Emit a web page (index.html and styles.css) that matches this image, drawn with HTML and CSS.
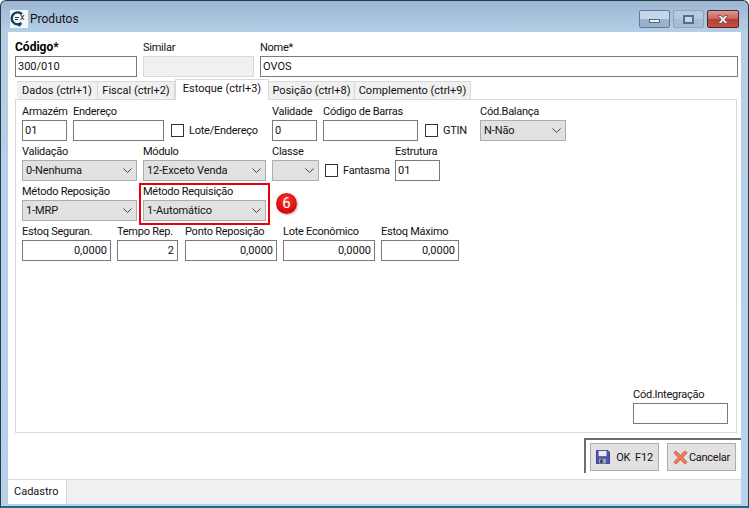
FILE: index.html
```html
<!DOCTYPE html>
<html lang="pt-BR">
<head>
    <meta charset="UTF-8">
    <title>Produtos</title>
    <link rel="stylesheet" href="styles.css">
</head>
<body>
    <div class="window">
        <div class="titlebar">
            <svg class="app-icon" width="18" height="18" viewBox="0 0 18 18">
                <rect width="18" height="18" fill="#f4f7fa"/>
                <path d="M12 4.200A6 6 0 1 0 11.500 13" fill="none" stroke="#123f5c" stroke-width="2.400"/>
                <path d="M5 7.500h4M5 9.500h3" stroke="#123f5c" stroke-width="1.200"/>
                <path d="M6.500 13.500l3 3.500 2-3z" fill="#123f5c"/>
                <text x="10" y="10" class="app-icon-text">x</text>
            </svg>
            <span class="title">Produtos</span>
            <div class="caption-buttons">
                <div class="cap-btn cap-min"><span class="cap-min-glyph"></span></div>
                <div class="cap-btn cap-max"><span class="cap-max-glyph"></span></div>
                <div class="cap-btn cap-close">
                    <svg width="16" height="11" viewBox="0 0 16 11">
                        <path d="M3 1.500h3l2 2.200 2-2.200h3L9.800 5.500 13 9.500h-3L8 7.300 6 9.500H3l3.200-4z" fill="#f2f2f2" stroke="#5a3a3a" stroke-width=".7"/>
                    </svg>
                </div>
            </div>
        </div>

        <div class="client">
            <div class="row top-row">
                <div class="field w122">
                    <label class="bold">Código*</label>
                    <input class="text-input" type="text" value="300/010">
                </div>
                <div class="field w111">
                    <label>Similar</label>
                    <input class="text-input disabled" type="text" disabled>
                </div>
                <div class="field grow">
                    <label>Nome*</label>
                    <input class="text-input" type="text" value="OVOS">
                </div>
            </div>

            <div class="tabs">
                <div class="tab w81">Dados (ctrl+1)</div>
                <div class="tab w77">Fiscal (ctrl+2)</div>
                <div class="tab active w94">Estoque (ctrl+3)</div>
                <div class="tab w86">Posição (ctrl+8)</div>
                <div class="tab w116">Complemento (ctrl+9)</div>
            </div>

            <div class="panel">
                <div class="row">
                    <div class="field w45">
                        <label>Armazém</label>
                        <input class="text-input" type="text" value="01">
                    </div>
                    <div class="field w91">
                        <label>Endereço</label>
                        <input class="text-input" type="text">
                    </div>
                    <div class="check w95 ml1"><span class="box"></span>Lote/Endereço</div>
                    <div class="field w45">
                        <label>Validade</label>
                        <input class="text-input" type="text" value="0">
                    </div>
                    <div class="field w95">
                        <label>Código de Barras</label>
                        <input class="text-input" type="text">
                    </div>
                    <div class="check w49 ml1"><span class="box"></span>GTIN</div>
                    <div class="field w86">
                        <label>Cód.Balança</label>
                        <div class="select">N-Não<svg class="chevron" width="9" height="5" viewBox="0 0 11 6"><path d="M.5.5l5 5 5-5" fill="none" stroke="#444" stroke-width="1.200"/></svg></div>
                    </div>
                </div>

                <div class="row">
                    <div class="field w115">
                        <label>Validação</label>
                        <div class="select">0-Nenhuma<svg class="chevron" width="9" height="5" viewBox="0 0 11 6"><path d="M.5.5l5 5 5-5" fill="none" stroke="#444" stroke-width="1.200"/></svg></div>
                    </div>
                    <div class="field w123">
                        <label>Módulo</label>
                        <div class="select">12-Exceto Venda<svg class="chevron" width="9" height="5" viewBox="0 0 11 6"><path d="M.5.5l5 5 5-5" fill="none" stroke="#444" stroke-width="1.200"/></svg></div>
                    </div>
                    <div class="field w47">
                        <label>Classe</label>
                        <div class="select"><svg class="chevron" width="9" height="5" viewBox="0 0 11 6"><path d="M.5.5l5 5 5-5" fill="none" stroke="#444" stroke-width="1.200"/></svg></div>
                    </div>
                    <div class="check w64"><span class="box"></span>Fantasma</div>
                    <div class="field w45">
                        <label>Estrutura</label>
                        <input class="text-input" type="text" value="01">
                    </div>
                </div>

                <div class="row">
                    <div class="field w115">
                        <label>Método Reposição</label>
                        <div class="select">1-MRP<svg class="chevron" width="9" height="5" viewBox="0 0 11 6"><path d="M.5.5l5 5 5-5" fill="none" stroke="#444" stroke-width="1.200"/></svg></div>
                    </div>
                    <div class="field w123">
                        <label>Método Requisição</label>
                        <div class="select">1-Automático<svg class="chevron" width="9" height="5" viewBox="0 0 11 6"><path d="M.5.5l5 5 5-5" fill="none" stroke="#444" stroke-width="1.200"/></svg></div>
                    </div>
                </div>

                <div class="row">
                    <div class="field w89">
                        <label>Estoq Seguran.</label>
                        <input class="text-input num" type="text" value="0,0000">
                    </div>
                    <div class="field w61">
                        <label>Tempo Rep.</label>
                        <input class="text-input num" type="text" value="2">
                    </div>
                    <div class="field w92 ml1">
                        <label>Ponto Reposição</label>
                        <input class="text-input num" type="text" value="0,0000">
                    </div>
                    <div class="field w92">
                        <label>Lote Econômico</label>
                        <input class="text-input num" type="text" value="0,0000">
                    </div>
                    <div class="field w78">
                        <label>Estoq Máximo</label>
                        <input class="text-input num" type="text" value="0,0000">
                    </div>
                </div>

                <div class="field w95 integration">
                    <label>Cód.Integração</label>
                    <input class="text-input" type="text">
                </div>

                <!-- marcacao do tutorial -->
                <div class="highlight"></div>
                <div class="badge">6</div>
            </div>

            <div class="footer">
                <div class="button-group">
                    <div class="btn">
                        <svg width="14" height="14" viewBox="0 0 16 16">
                            <path d="M.5.5h13l2 2v13H.5z" fill="#4a55ad" stroke="#2c3480"/>
                            <rect x="3" y="1" width="9" height="6" fill="#e8ecf5"/>
                            <rect x="3.500" y="10" width="8" height="5.500" fill="#9aa0ad"/>
                            <rect x="5" y="11" width="2.500" height="4" fill="#33363f"/>
                        </svg>
                        <span class="btn-ok-text">OK&nbsp; F12</span>
                    </div>
                    <div class="btn">
                        <svg width="15" height="15" viewBox="0 0 16 16">
                            <path d="M1 3l2-2 5 4.500 5-4.500 2 2-4.500 5 4.500 5-2 2-5-4.500-5 4.500-2-2 4.500-5z" fill="#f47a5a" stroke="#d0583c" stroke-width=".9"/>
                        </svg>
                        <span>Cancelar</span>
                    </div>
                </div>
            </div>

            <div class="statusbar">
                <div class="status-tab">Cadastro</div>
            </div>
        </div>
    </div>
</body>
</html>
```
FILE: styles.css
```css
* {
    box-sizing: border-box;
}

body {
    margin: 0;
    width: 749px;
    height: 508px;
    overflow: hidden;
    font-family: Roboto, 'Liberation Sans', sans-serif;
    font-size: 11px;
    color: #111;
    background: #fff;
}

.window {
    height: 508px;
    display: flex;
    flex-direction: column;
    padding: 0 7px 6px;
    border: 1px solid #2a3b47;
    border-bottom: 2px solid #1d6f80;
    border-radius: 6px 6px 0 0;
    background: linear-gradient(#9cb7d3 0, #b6cfe7 32px, #b9d2ec 100%);
}

/* barra de titulo */
.titlebar {
    height: 31px;
    flex: none;
    padding-top: 5px;
    display: flex;
    align-items: center;
}

.app-icon {
    margin: 0 2px 0 2px;
}

.app-icon-text {
    font-size: 9px;
    fill: #222;
}

.title {
    font-size: 12px;
    color: #111;
}

.caption-buttons {
    margin-left: auto;
    margin-right: 2px;
    display: flex;
    gap: 3px;
}

.cap-btn {
    height: 18px;
    border: 1px solid #5f7a96;
    border-radius: 2px;
    display: flex;
    align-items: center;
    justify-content: center;
}

.cap-min {
    width: 31px;
    background: linear-gradient(#c4d6e9 50%, #98b3cf 50%);
}

.cap-min-glyph {
    width: 11px;
    height: 4px;
    margin-top: 4px;
    background: #eef2f6;
    border: 1px solid #56657a;
}

.cap-max {
    width: 31px;
    border-color: #8aa5c0;
    background: linear-gradient(#b4cadf 50%, #a4bdd8 50%);
}

.cap-max-glyph {
    width: 11px;
    height: 9px;
    border: 2px solid #5a6c82;
    background: #c5d5e5;
}

.cap-close {
    width: 32px;
    border-color: #5a2030;
    background: linear-gradient(#dc9a90 0, #c9615a 50%, #b33e30 50%, #c8503f 100%);
}

/* area do formulario */
.client {
    flex: 1;
    min-height: 0;
    display: flex;
    flex-direction: column;
    background: #fff;
}

.row {
    display: flex;
    gap: 6px;
    margin-bottom: 2px;
}

.top-row {
    padding: 7px 3px 0 7px;
    margin-bottom: 2px;
}

.field {
    display: flex;
    flex-direction: column;
    flex: none;
}

.field label {
    height: 17px;
    line-height: 17px;
    letter-spacing: -.25px;
    white-space: nowrap;
}

.field .bold {
    font-size: 12px;
    font-weight: 700;
    letter-spacing: 0;
    color: #000;
}

.grow { flex: 1; }
.w45 { width: 45px; }
.w47 { width: 47px; }
.w49 { width: 49px; }
.w61 { width: 61px; }
.w64 { width: 64px; }
.w77 { width: 77px; }
.w78 { width: 78px; }
.w81 { width: 81px; }
.w86 { width: 86px; }
.w89 { width: 89px; }
.w91 { width: 91px; }
.w92 { width: 92px; }
.w94 { width: 94px; }
.w95 { width: 95px; }
.w111 { width: 111px; }
.w115 { width: 115px; }
.w116 { width: 116px; }
.w122 { width: 122px; }
.w123 { width: 123px; }
.ml1 { margin-left: 1px; }

.text-input {
    width: 100%;
    height: 21px;
    padding: 0 2px;
    border: 1px solid #7a7a7a;
    border-radius: 0;
    outline: none;
    background: #fff;
    font: inherit;
    color: #111;
}

.text-input.disabled {
    background: #f0f0f0;
    border-color: #d9d9d9;
}

.text-input.num {
    padding-right: 3px;
    text-align: right;
}

.select {
    height: 21px;
    padding: 0 3px;
    display: flex;
    align-items: center;
    justify-content: space-between;
    background: #e1e1e1;
    border: 1px solid #adadad;
    letter-spacing: -.1px;
    white-space: nowrap;
}

.chevron {
    flex: none;
    margin-left: auto;
    margin-right: 1px;
}

.check {
    flex: none;
    height: 21px;
    margin-top: 17px;
    display: flex;
    align-items: center;
    gap: 5px;
    letter-spacing: -.25px;
    white-space: nowrap;
}

.box {
    width: 13px;
    height: 13px;
    flex: none;
    background: #fff;
    border: 1px solid #333;
}

/* abas */
.tabs {
    height: 20px;
    flex: none;
    padding-left: 9px;
    display: flex;
    align-items: flex-end;
}

.tab {
    height: 18px;
    flex: none;
    background: #f0f0f0;
    border: 1px solid #d9d9d9;
    border-bottom: none;
    border-left: none;
    text-align: center;
    line-height: 18px;
    white-space: nowrap;
}

.tab.active {
    height: 21px;
    margin-bottom: -1px;
    line-height: 17px;
    background: #fff;
    border-left: 1px solid #d9d9d9;
    position: relative;
    z-index: 1;
}

.panel {
    height: 334px;
    flex: none;
    margin: 0 4px 0 7px;
    padding: 3px 6px 0;
    display: flex;
    flex-direction: column;
    border: 1px solid #d9d9d9;
    position: relative;
}

.integration {
    margin-top: auto;
    margin-bottom: 8px;
    margin-right: 2px;
    align-self: flex-end;
}

.highlight {
    position: absolute;
    left: 123px;
    top: 83px;
    width: 131px;
    height: 42px;
    border: 2px solid #e8000c;
}

.badge {
    position: absolute;
    left: 260px;
    top: 93px;
    width: 21px;
    height: 21px;
    border-radius: 50%;
    background: radial-gradient(circle at 50% 35%, #f23a2e, #d80808 70%);
    box-shadow: 1px 1px 2px rgba(0, 0, 0, 0.3);
    color: #fff;
    font-size: 15px;
    line-height: 20px;
    text-align: center;
}

/* botoes */
.footer {
    height: 46px;
    flex: none;
    padding-top: 5px;
    display: flex;
    justify-content: flex-end;
}

.button-group {
    width: 157px;
    height: 35px;
    padding: 3px 5px 0 4px;
    display: flex;
    gap: 8px;
    border-top: 2px solid #6e6e6e;
    border-left: 2px solid #6e6e6e;
}

.btn {
    width: 69px;
    height: 28px;
    display: flex;
    align-items: center;
    justify-content: center;
    gap: 1px;
    background: #e1e1e1;
    border: 1px solid #adadad;
    letter-spacing: -.25px;
    white-space: nowrap;
}

.btn-ok-text {
    margin-left: 5px;
}

/* barra inferior */
.statusbar {
    flex: 1;
    display: flex;
    background: #f0f0f0;
    border-top: 1px solid #d9d9d9;
}

.status-tab {
    width: 59px;
    background: #fff;
    border-right: 1px solid #d9d9d9;
    padding-left: 6px;
    line-height: 24px;
}
```
